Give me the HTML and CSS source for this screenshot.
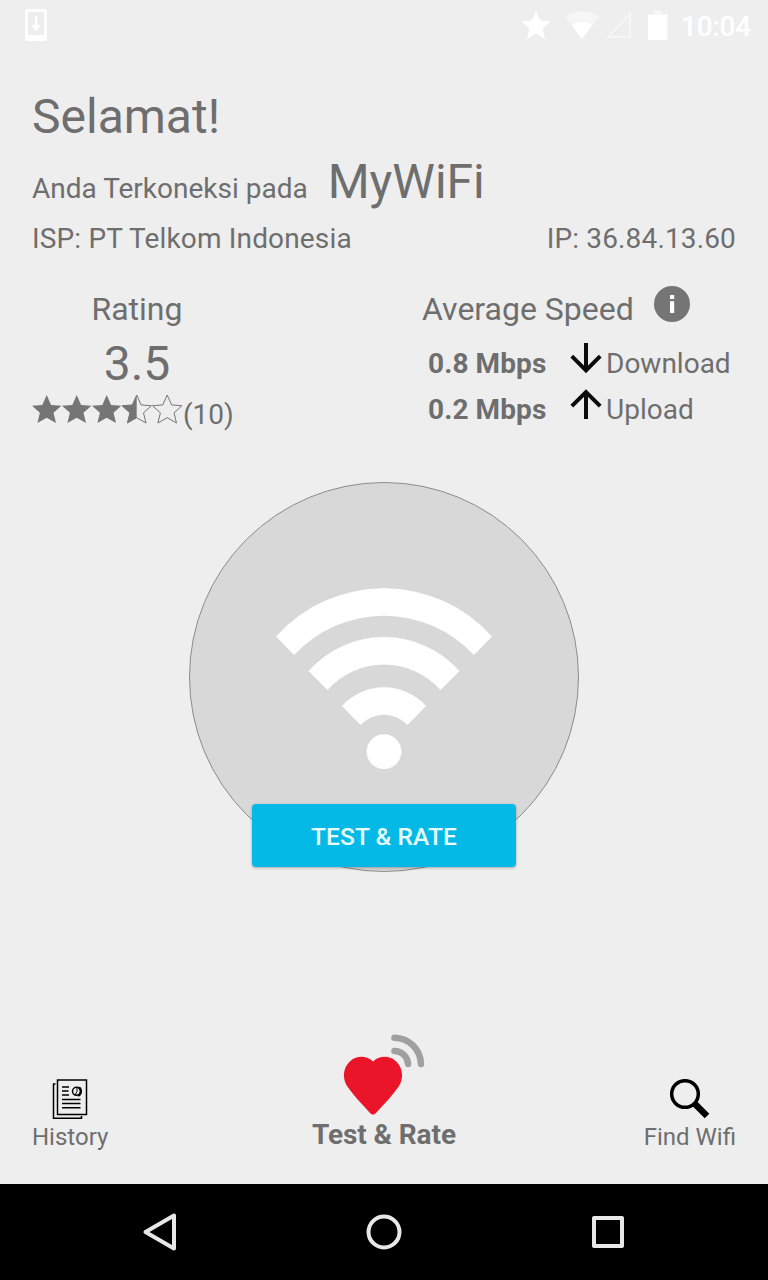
FILE: index.html
```html
<!DOCTYPE html>
<html lang="id">
<head>
  <title>MyWiFi</title>
  <meta charset="UTF-8" />
  <meta name="viewport" content="width=device-width, initial-scale=1.0" />
  <link rel="stylesheet" href="styles.css">
</head>
<body>

  <div class="screen">
    <!-- Status bar -->
    <header class="status-bar">
      <svg class="status-download" width="24" height="34" viewBox="0 0 24 34">
        <path fill="#fff" fill-rule="evenodd" d="M4 1h16a3 3 0 0 1 3 3v26a3 3 0 0 1-3 3H4a3 3 0 0 1-3-3V4a3 3 0 0 1 3-3zM4 4v23h16V4zM11 8h2.200v9h3.500l-4.600 6.500L7.500 17H11z" />
      </svg>
      <svg width="30" height="28" viewBox="0 0 30 28">
        <path fill="#fff" d="M15 0l4.200 9.500 10.300 1-7.700 7 2.200 10.500-9-5.500L6 28l2.200-10.500-7.700-7 10.300-1z" />
      </svg>
      <svg class="status-wifi" width="36" height="28" viewBox="0 0 36 28">
        <path fill="#f6f6f6" d="M1 6Q18-6 35 6L18 28z" />
        <path fill="#fff" d="M7.500 14Q18 7.500 28.500 14L18 28z" />
      </svg>
      <svg class="status-signal" width="26" height="28" viewBox="0 0 26 28">
        <path fill="none" stroke="#f6f6f6" stroke-width="2" d="M24 3v23H2z" />
      </svg>
      <svg class="status-battery" width="20" height="30" viewBox="0 0 20 30">
        <path fill="#f8f8f8" d="M6 1h8v4H6z" />
        <path fill="#fff" d="M0 4.500h19.500V30H0z" />
      </svg>
      <span class="clock">10:04</span>
    </header>

    <main class="content">
      <!-- Connection details -->
      <h1 class="greeting">Selamat!</h1>
      <div class="network">
        <span>Anda Terkoneksi pada</span>
        <span class="network-name">MyWiFi</span>
      </div>
      <div class="provider">
        <span>ISP: PT Telkom Indonesia</span>
        <span>IP: 36.84.13.60</span>
      </div>

      <div class="stats">
        <!-- Rating with stars -->
        <section class="rating">
          <h2>Rating</h2>
          <div class="score">3.5</div>
          <div class="stars">
            <svg width="151" height="30" viewBox="0 0 151 30">
              <defs>
                <path id="star" d="M14.700 0l4.400 9.900 10.300.9-7.900 7 2.500 10.200-9.300-5.300L5.400 28l2.500-10.200L0 10.800l10.300-.9z" />
              </defs>
              <g fill="#757575">
                <use href="#star" />
                <use href="#star" x="30" />
                <use href="#star" x="60" />
                <path d="M104.700 0v22.700L95.400 28l2.500-10.200-7.900-7 10.300-.9z" />
              </g>
              <g fill="none" stroke="#757575" stroke-width="1">
                <use href="#star" x="90" />
                <use href="#star" x="120.500" />
              </g>
            </svg>
            <span>(10)</span>
          </div>
        </section>

        <!-- Average speed -->
        <section class="speed">
          <div class="speed-title">
            <h2>Average Speed</h2>
            <svg width="36" height="36" viewBox="0 0 36 36">
              <circle cx="18" cy="18" r="18" fill="#757575" />
              <path fill="#fff" d="M16 9h4.200v4H16zM16 15.200h4.200V27H16z" />
            </svg>
          </div>
          <div class="speed-row">
            <b>0.8 Mbps</b>
            <svg width="32" height="32" viewBox="0 0 32 32">
              <path fill="none" stroke="#0c0c0c" stroke-width="4" d="M16 0v27M1.800 13.200L16 27.400l14.200-14.200" />
            </svg>
            <span>Download</span>
          </div>
          <div class="speed-row">
            <b>0.2 Mbps</b>
            <svg width="32" height="32" viewBox="0 0 32 32">
              <path fill="none" stroke="#0c0c0c" stroke-width="4" d="M16 30V4M1.800 17.200L16 3l14.200 14.200" />
            </svg>
            <span>Upload</span>
          </div>
        </section>
      </div>

      <!-- Big wifi circle and test button -->
      <div class="wifi-circle">
        <svg width="218" height="182" viewBox="275 588 218 182">
          <g fill="#fff">
            <path d="M276 636.500A145 145 0 0 1 492 636.500L474 655A123 123 0 0 0 294 655z" />
            <path d="M308.500 671A101 101 0 0 1 459.500 671L440.500 690A75.500 75.500 0 0 0 327.500 690z" />
            <path d="M342 706A56.500 56.500 0 0 1 426 706L407.500 725A32 32 0 0 0 360.500 725z" />
            <circle cx="384" cy="751.700" r="17.400" />
          </g>
        </svg>
        <button class="test-button">TEST &amp; RATE</button>
      </div>
    </main>

    <!-- Tabs -->
    <nav class="tabs">
      <a class="tab">
        <svg width="36" height="41" viewBox="0 0 36 41">
          <g fill="none" stroke="#000" stroke-width="1.500">
            <path d="M3.500 5H1.500v34.200h28V37" />
            <path d="M5.500 1h29v34.500h-29z" />
            <path d="M10 8h7M10 12h6.500M10 16h7M10 20.500h18.500M10 24.500h18.500M10 28.700h18.500" />
            <circle cx="24.500" cy="12.300" r="4" />
            <path stroke-width="2.200" d="M27 8.500a4.800 4.800 0 0 1-1 8.300" />
            <path stroke-width="1" d="M25 8v4.500l-2 3.500" />
          </g>
        </svg>
        <span>History</span>
      </a>
      <a class="tab tab-active">
        <svg width="82" height="82" viewBox="0 0 82 82">
          <path fill="#ea1529" d="M30 27.500C35 22 46 21 52 26.500c8 6.500 9 17.500 4 25.500-6 9-14 17-23 27-2 2-4 2-6 0C18 69 10 61 4 52-1 44 0 33 8 26.500 14 21 25 22 30 27.500z" />
          <path fill="none" stroke="#a0a0a0" stroke-width="6.500" stroke-linecap="round" d="M51.500 17a13.500 13.500 0 0 1 13.500 13M51.500 3.700C66 4 77.500 15 78 30" />
        </svg>
        <span>Test &amp; Rate</span>
      </a>
      <a class="tab">
        <svg width="42" height="41" viewBox="0 0 42 41">
          <circle cx="16" cy="15" r="13.300" fill="none" stroke="#000" stroke-width="3.500" />
          <path stroke="#000" stroke-width="6.500" d="M25.500 24.500L38 37" />
        </svg>
        <span>Find Wifi</span>
      </a>
    </nav>

    <!-- System navigation -->
    <footer class="system-nav">
      <svg width="36" height="40" viewBox="0 0 36 40">
        <path d="M32 3.500v33L3.500 20z" />
      </svg>
      <svg width="36" height="40" viewBox="0 0 36 40">
        <circle cx="18" cy="20" r="15.500" />
      </svg>
      <svg width="36" height="40" viewBox="0 0 36 40">
        <path d="M4 6h28v28H4z" />
      </svg>
    </footer>
  </div>

</body>
</html>
```
FILE: styles.css
```css
/* Set font */
body {
  margin: 0;
  background: #eee;
  color: #6e6e6e;
  font-family: Roboto, "Liberation Sans", sans-serif;
  font-size: 28px;
  line-height: 32px;
}

svg {
  display: block;
  flex-shrink: 0;
}

h1,
h2 {
  margin: 0;
  font-weight: 400;
}

h2 {
  font-size: 32px;
  line-height: 38px;
}

.screen {
  display: flex;
  flex-direction: column;
  height: 1280px;
}

/* Status bar */
.status-bar {
  display: flex;
  align-items: center;
  box-sizing: border-box;
  height: 50px;
  padding: 0 17px 0 24px;
  color: #fff;
}

.status-download {
  margin-right: auto;
}

.status-wifi {
  margin-left: 13px;
}

.status-signal {
  margin-left: 6px;
}

.status-battery {
  margin-left: 16px;
}

.clock {
  width: 70px;
  margin-left: 13px;
  padding-top: 3px;
  font-weight: 500;
  letter-spacing: -0.2px;
}

/* Connection details */
.content {
  flex: 1;
  padding: 39px 32px 0;
}

.greeting,
.network-name,
.score {
  font-size: 48px;
  line-height: 56px;
}

.network {
  display: flex;
  align-items: baseline;
  gap: 20px;
  margin-top: 9px;
}

.provider {
  display: flex;
  justify-content: space-between;
  margin-top: 13px;
  letter-spacing: 0.15px;
}

/* Rating and speed */
.stats {
  display: flex;
  justify-content: space-between;
  height: 148px;
  margin-top: 35px;
}

.rating {
  width: 210px;
  text-align: center;
}

.score {
  margin-top: 8px;
}

.stars {
  display: flex;
  margin-top: 3px;
}

.stars span {
  padding-top: 4px;
}

.speed {
  width: 314px;
}

.speed-title {
  display: flex;
  gap: 20px;
  margin-bottom: 15px;
}

.speed-title svg {
  margin-top: -4px;
}

.speed-row {
  display: flex;
  height: 46px;
  padding-left: 6px;
}

.speed-row b {
  width: 142px;
  padding-top: 5px;
  letter-spacing: 0.1px;
}

.speed-row span {
  padding: 5px 0 0 4px;
}

/* Wifi circle */
.wifi-circle {
  display: flex;
  flex-direction: column;
  align-items: center;
  box-sizing: border-box;
  width: 390px;
  height: 390px;
  margin: 44px auto 0;
  padding-top: 105px;
  border: 1px solid #8c8c8c;
  border-radius: 50%;
  background: #d8d8d8;
}

.test-button {
  flex-shrink: 0;
  width: 264px;
  height: 63px;
  margin-top: 34px;
  padding: 2px 0 0;
  border: 0;
  border-radius: 4px;
  background: #04b9e6;
  box-shadow: 0 1px 3px rgba(0, 0, 0, 0.3);
  color: #e8ffff;
  font-family: inherit;
  font-size: 24.500px;
  font-weight: 500;
  letter-spacing: 0.1px;
}

/* Tabs */
.tabs {
  display: grid;
  grid-template-columns: 1fr auto 1fr;
  align-items: end;
  padding: 0 32px 33px;
  font-size: 24px;
  line-height: 28px;
}

.tab {
  display: flex;
  flex-direction: column;
  align-items: center;
  gap: 3px;
  justify-self: start;
}

.tab:last-child {
  justify-self: end;
}

.tab-active {
  font-size: 28px;
  font-weight: 700;
  line-height: 32px;
  letter-spacing: -0.1px;
}

/* System navigation */
.system-nav {
  display: flex;
  align-items: center;
  justify-content: space-between;
  height: 96px;
  padding: 0 142px;
  background: #000;
}

.system-nav svg {
  fill: none;
  stroke: #e8e8e8;
  stroke-width: 4;
  stroke-linejoin: round;
}
```
